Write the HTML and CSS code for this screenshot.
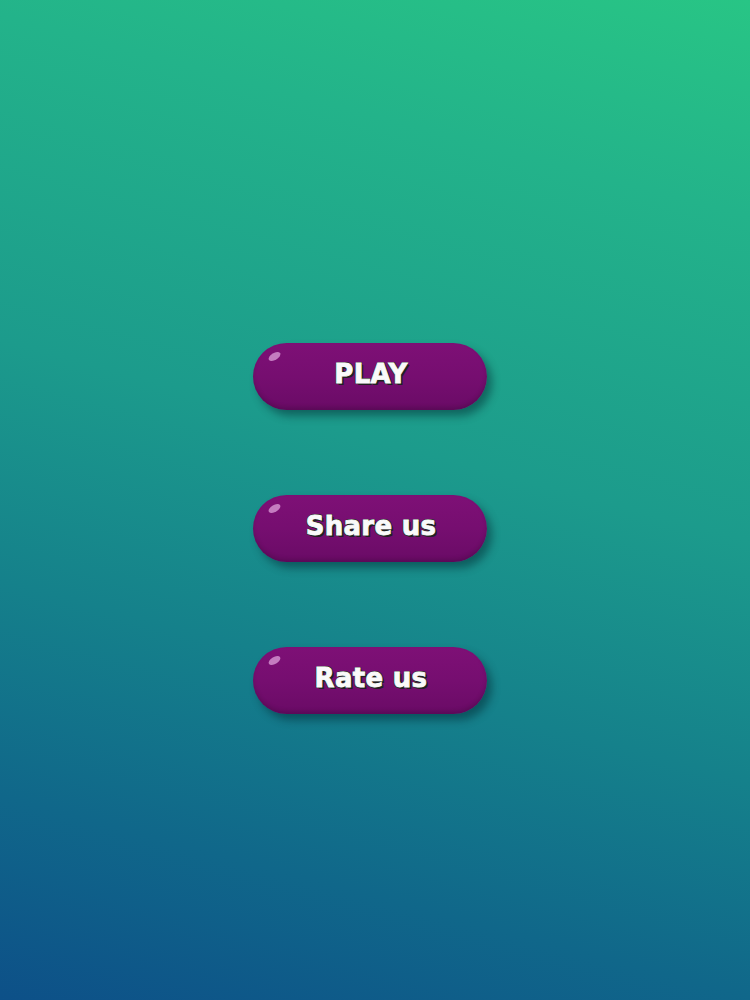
FILE: index.html
```html
<!DOCTYPE html>
<html>
<head>
<meta charset="utf-8">
<link rel="stylesheet" href="styles.css">
</head>
<body>
<main class="screen">
  <div class="menu">
    <button class="pill"><span class="shine"></span><span class="label">PLAY</span></button>
    <button class="pill"><span class="shine"></span><span class="label">Share us</span></button>
    <button class="pill"><span class="shine"></span><span class="label">Rate us</span></button>
  </div>
</main>
</body>
</html>
```
FILE: styles.css
```css
html, body {
  margin: 0;
  padding: 0;
}
.screen {
  width: 750px;
  height: 1000px;
  overflow: hidden;
  background: linear-gradient(195deg, #28c585 0%, #23b38a 18%, #1c9b8c 45%, #15818b 65%, #10678a 83%, #0d5088 100%);
  display: flex;
  justify-content: flex-start;
}
.menu {
  display: flex;
  flex-direction: column;
  gap: 85px;
  padding-top: 343px;
  padding-left: 253px;
}
.pill {
  position: relative;
  width: 234px;
  height: 67px;
  border: none;
  border-radius: 34px;
  background: linear-gradient(to bottom, #7e1076 0%, #760e70 50%, #6a0b66 100%);
  box-shadow: 5px 6px 8px rgba(0, 30, 40, 0.45), inset 0 -3px 4px rgba(0,0,0,0.15);
  display: flex;
  align-items: center;
  justify-content: center;
  padding: 0 0 6px 2px;
  cursor: pointer;
}
.shine {
  position: absolute;
  left: 15px;
  top: 10px;
  width: 13px;
  height: 7px;
  border-radius: 50%;
  background: #c47cc0;
  transform: rotate(-30deg);
}
.label {
  font-family: "DejaVu Sans", sans-serif;
  font-weight: bold;
  font-size: 26px;
  color: #fafafa;
  letter-spacing: 0.3px;
  -webkit-text-stroke: 0.8px #fafafa;
  text-shadow: 1px 1px 0 #222, 2px 2px 0 #222, -1px 0 0 #333, 0 -1px 0 #333, 1px -1px 0 #333, -1px 1px 0 #333;
}
```
